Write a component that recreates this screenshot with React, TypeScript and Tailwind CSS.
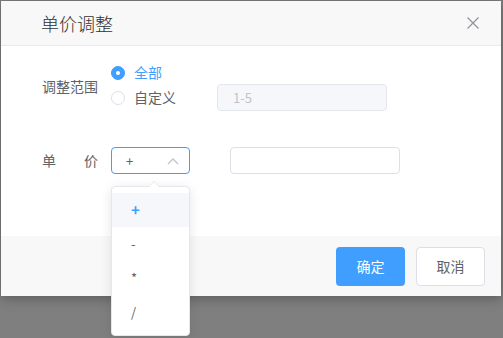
const font = { fontFamily: '"Noto Sans CJK SC", "Noto Sans", sans-serif' };

const Radio = ({ checked, label }: { checked?: boolean; label: string }) => (
  <label className="flex items-center gap-[9px] cursor-pointer">
    {checked ? (
      <span className="w-[14px] h-[14px] rounded-full bg-[#409eff] border border-[#409eff] flex items-center justify-center">
        <span className="w-[4px] h-[4px] rounded-full bg-white" />
      </span>
    ) : (
      <span className="w-[14px] h-[14px] rounded-full bg-white border border-[#dcdfe6]" />
    )}
    <span className={checked ? "text-[#409eff]" : "text-[#606266]"}>{label}</span>
  </label>
);

export default function App() {
  const options = ["+", "-", "*", "/"];
  return (
    <div className="w-[503px] h-[338px] bg-[#7f7f7f] pl-[1px] pt-[1px] overflow-hidden text-[14px]" style={font}>
      <div className="w-[500px] h-[295px] bg-white shadow-[0_2px_12px_rgba(0,0,0,0.3)] flex flex-col">
        {/* header */}
        <div className="h-[45px] bg-[#f8f8f8] border-b border-[#e9e9e9] flex items-center justify-between pl-[40px] pr-[22px]">
          <span className="text-[18px] text-[#303133] font-light">单价调整</span>
          <svg width="12" height="12" viewBox="0 0 12 12" className="text-[#909399]">
            <path d="M0.5 0.5 L11.5 11.5 M11.5 0.5 L0.5 11.5" stroke="currentColor" strokeWidth="1.2" fill="none" />
          </svg>
        </div>

        {/* body */}
        <div className="h-[190px] pl-[41px] pt-[15px]">
          <div className="flex items-center">
            <span className="w-[56px] mr-[13px] text-[#606266]">调整范围</span>
            <div className="flex flex-col">
              <div className="h-[23px] flex items-center">
                <Radio checked label="全部" />
              </div>
              <div className="h-[27px] flex items-center">
                <div className="w-[106px]">
                  <Radio label="自定义" />
                </div>
                <div className="w-[170px] h-[27px] bg-[#f5f7fa] border border-[#e4e7ed] rounded-[4px] flex items-center pl-[15px] text-[13px] text-[#c0c4cc]">
                  1-5
                </div>
              </div>
            </div>
          </div>

          <div className="flex items-center mt-[36px]">
            <span className="w-[56px] mr-[13px] flex justify-between text-[#606266]">
              <span>单</span>
              <span>价</span>
            </span>
            <div className="relative">
              <div className="w-[79px] h-[27px] border border-[#409eff] rounded-[4px] flex items-center justify-between pl-[14px] pr-[10px] text-[#606266]">
                <span className="text-[13px]">+</span>
                <svg width="12" height="8" viewBox="0 0 12 8">
                  <path d="M1 7 L6 2 L11 7" stroke="#c0c4cc" strokeWidth="1.3" fill="none" />
                </svg>
              </div>
              {/* dropdown */}
              <div className="absolute left-0 top-[39px] w-[79px] bg-white border border-[#e4e7ed] rounded-[4px] shadow-[0_2px_12px_rgba(0,0,0,0.1)] py-[6px] z-10">
                <div className="absolute -top-[6px] left-[36px] w-0 h-0 border-l-[6px] border-r-[6px] border-b-[6px] border-l-transparent border-r-transparent border-b-[#e4e7ed]" />
                <div className="absolute -top-[5px] left-[37px] w-0 h-0 border-l-[5px] border-r-[5px] border-b-[5px] border-l-transparent border-r-transparent border-b-white" />
                {options.map((o, i) => (
                  <div
                    key={o}
                    className={
                      "h-[34px] flex items-center pl-[19px] " +
                      (i === 0 ? "bg-[#f5f7fa] text-[#409eff] font-bold text-[15px]" : "text-[#606266] text-[13px]")
                    }
                  >
                    {o}
                  </div>
                ))}
              </div>
            </div>
            <div className="ml-[40px] w-[170px] h-[27px] bg-white border border-[#dcdfe6] rounded-[4px]" />
          </div>
        </div>

        {/* footer */}
        <div className="flex-1 bg-[#f8f8f8] flex items-center justify-end gap-[11px] pr-[16px]">
          <button className="w-[69px] h-[39px] bg-[#409eff] text-white rounded-[4px]">确定</button>
          <button className="w-[69px] h-[39px] bg-white border border-[#dcdfe6] text-[#606266] rounded-[4px]">取消</button>
        </div>
      </div>
    </div>
  );
}
